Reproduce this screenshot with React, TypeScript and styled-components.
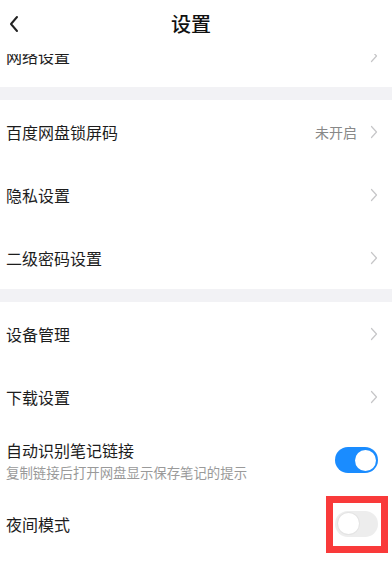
import React from "react";
import styled, { createGlobalStyle } from "styled-components";

const Global = createGlobalStyle`
  html, body { margin: 0; padding: 0; background: #ffffff; }
  body { font-family: "Noto Sans CJK SC", "Noto Sans", sans-serif; -webkit-font-smoothing: antialiased; }
`;

const Page = styled.div`
  width: 392px;
  height: 567px;
  display: flex;
  flex-direction: column;
  overflow: hidden;
  background: #ffffff;
`;

const Header = styled.header`
  flex: none;
  height: 54px;
  display: grid;
  grid-template-columns: 40px 1fr 40px;
  align-items: start;
  background: #ffffff;
  position: relative;
  z-index: 2;
`;

const BackButton = styled.button`
  height: 48px;
  border: 0;
  background: none;
  padding: 0 0 0 8px;
  display: flex;
  align-items: center;
  justify-content: flex-start;
`;

const Title = styled.h1`
  margin: 0;
  height: 48px;
  line-height: 48px;
  text-align: center;
  font-size: 20px;
  font-weight: 500;
  color: #111;
  padding-right: 10px;
`;

const Scroller = styled.div`
  flex: 1;
  overflow: hidden;
`;

const List = styled.div`
  margin-top: -30px;
  display: flex;
  flex-direction: column;
`;

const Band = styled.div`
  height: 13px;
  background: #f2f2f5;
`;

const Row = styled.div<{ $h?: number }>`
  height: ${(p) => p.$h ?? 63}px;
  display: flex;
  align-items: center;
  padding: 0 14px 0 6px;
  background: #fff;
`;

const Texts = styled.div`
  flex: 1;
  display: flex;
  flex-direction: column;
  gap: 2px;
`;

const Label = styled.div`
  font-size: 16px;
  color: #1d1d1d;
  line-height: 22px;
`;

const Sub = styled.div`
  font-size: 13.4px;
  color: #9a9a9a;
  line-height: 18px;
`;

const Value = styled.span`
  font-size: 14px;
  color: #888;
  margin-right: 13px;
`;

const Chevron = () => (
  <svg width="8" height="14" viewBox="0 0 8 14" fill="none">
    <path d="M1.5 1.5 L6.5 7 L1.5 12.5" stroke="#c6c6c8" strokeWidth="1.2" strokeLinecap="round" strokeLinejoin="round" />
  </svg>
);

const Switch = styled.div<{ $on: boolean }>`
  width: 43px;
  height: 26px;
  border-radius: 13px;
  box-sizing: border-box;
  padding: 2.5px;
  display: flex;
  justify-content: ${(p) => (p.$on ? "flex-end" : "flex-start")};
  background: ${(p) => (p.$on ? "#1a8cff" : "#ededed")};
`;

const Knob = styled.div<{ $on: boolean }>`
  width: 21px;
  height: 21px;
  border-radius: 50%;
  background: #fff;
  box-shadow: ${(p) => (p.$on ? "none" : "0 0 0 1px #e4e4e4")};
`;

const Marked = styled.div`
  position: relative;
  display: flex;
`;

const Highlight = styled.div`
  position: absolute;
  left: -9px;
  right: -10px;
  top: -15px;
  bottom: -16px;
  border: 7px solid #f93a3a;
  pointer-events: none;
`;

type Item = { label: string; value?: string };

const NavRow = ({ label, value }: Item) => (
  <Row>
    <Texts>
      <Label>{label}</Label>
    </Texts>
    {value && <Value>{value}</Value>}
    <Chevron />
  </Row>
);

export default function App() {
  return (
    <Page>
      <Global />
      <Header>
        <BackButton aria-label="返回">
          <svg width="12" height="18" viewBox="0 0 12 18" fill="none">
            <path d="M9 2 L3 9 L9 16" stroke="#222" strokeWidth="2" strokeLinecap="round" strokeLinejoin="round" />
          </svg>
        </BackButton>
        <Title>设置</Title>
        <div />
      </Header>
      <Scroller>
        <List>
          <NavRow label="网络设置" />
          <Band />
          <NavRow label="百度网盘锁屏码" value="未开启" />
          <NavRow label="隐私设置" />
          <NavRow label="二级密码设置" />
          <Band />
          <NavRow label="设备管理" />
          <NavRow label="下载设置" />
          <Row $h={64}>
            <Texts>
              <Label>自动识别笔记链接</Label>
              <Sub>复制链接后打开网盘显示保存笔记的提示</Sub>
            </Texts>
            <Switch $on>
              <Knob $on />
            </Switch>
          </Row>
          <Row>
            <Texts>
              <Label>夜间模式</Label>
            </Texts>
            <Marked>
              <Switch $on={false}>
                <Knob $on={false} />
              </Switch>
              <Highlight />
            </Marked>
          </Row>
        </List>
      </Scroller>
    </Page>
  );
}
